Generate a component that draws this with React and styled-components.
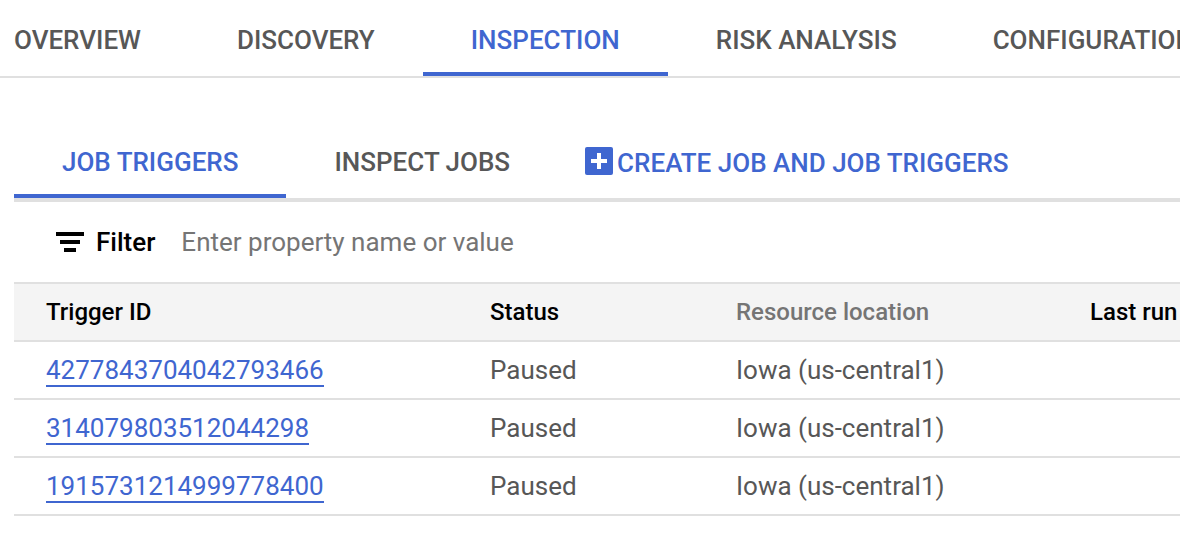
import React from "react";
import styled, { createGlobalStyle } from "styled-components";

const Global = createGlobalStyle`
  * { box-sizing: border-box; }
  body { margin: 0; background: #fff; font-family: Roboto, "Liberation Sans", sans-serif; color: #575757; overflow-x: hidden; }
  button, input { font-family: inherit; }
`;

const Page = styled.main`
  overflow: hidden;
`;

const MainTabs = styled.nav`
  display: flex;
  height: 78px;
  border-bottom: 2px solid #e0e0e0;
`;

const MainTab = styled.a`
  flex: none;
  height: 76px;
  padding: 4px 48px 0;
  line-height: 72px;
  font-size: 26px;
  font-weight: 500;
  white-space: nowrap;
  text-decoration: none;
  color: ${(p) => (p.$active ? "#3f66d0" : "#575757")};
  box-shadow: ${(p) => (p.$active ? "inset 0 -4px #3f66d0" : "none")};
  &:first-child { padding-left: 14px; }
`;

const Section = styled.section`
  margin: 48px 0 0 14px;
`;

const SubTabs = styled.div`
  display: flex;
  height: 76px;
  border-bottom: 4px solid #e0e0e0;
`;

const SubTab = styled.button`
  flex: none;
  height: 72px;
  padding: 0 48px;
  border: 0;
  background: none;
  font-size: 26px;
  font-weight: 500;
  white-space: nowrap;
  color: ${(p) => (p.$active ? "#3f66d0" : "#575757")};
  box-shadow: ${(p) => (p.$active ? "inset 0 -4px #3f66d0" : "none")};
`;

const CreateButton = styled.button`
  display: flex;
  align-items: flex-start;
  gap: 4px;
  padding: 21px 0 0;
  margin-left: 27px;
  border: 0;
  background: none;
  font-size: 26px;
  line-height: 32px;
  font-weight: 500;
  white-space: nowrap;
  color: #3f66d0;
`;

const FilterBar = styled.label`
  display: flex;
  align-items: center;
  height: 80px;
  padding-left: 42px;
`;

const FilterLabel = styled.span`
  margin: 0 26px 0 12px;
  font-size: 26px;
  font-weight: 500;
  color: #000;
`;

const FilterInput = styled.input`
  flex: 1;
  min-width: 0;
  padding: 0;
  border: 0;
  outline: 0;
  font-size: 26px;
  color: #333;
  &::placeholder { color: #757575; opacity: 1; }
`;

const Table = styled.table`
  width: 100%;
  table-layout: fixed;
  border-collapse: separate;
  border-spacing: 0;
  text-align: left;
`;

const Col = styled.col`
  width: ${(p) => p.$width};
`;

const HeadCell = styled.th`
  height: 60px;
  padding: 0 0 0 32px;
  border-top: 2px solid #e0e0e0;
  border-bottom: 2px solid #e0e0e0;
  background: #f4f4f4;
  font-size: 24px;
  font-weight: 500;
  white-space: nowrap;
  color: ${(p) => (p.$muted ? "#757575" : "#000")};
`;

const Cell = styled.td`
  height: 58px;
  padding: 0 0 0 32px;
  border-bottom: 2px solid #e0e0e0;
  font-size: 26px;
  white-space: nowrap;
`;

const TriggerLink = styled.a`
  border-bottom: 2px solid #3f66d0;
  color: #3f66d0;
  text-decoration: none;
`;

const mainTabs = ["OVERVIEW", "DISCOVERY", "INSPECTION", "RISK ANALYSIS", "CONFIGURATION"];
const triggers = ["4277843704042793466", "314079803512044298", "1915731214999778400"];

export default function App() {
  return (
    <Page>
      <Global />
      <MainTabs>
        {mainTabs.map((t) => (
          <MainTab key={t} href="#" $active={t === "INSPECTION"}>{t}</MainTab>
        ))}
      </MainTabs>
      <Section>
        <SubTabs>
          <SubTab $active>JOB TRIGGERS</SubTab>
          <SubTab>INSPECT JOBS</SubTab>
          <CreateButton>
            <svg width="28" height="28" viewBox="0 0 28 28" aria-hidden="true">
              <rect width="28" height="28" rx="2" fill="#3f66d0" />
              <path d="M14 6v16M6 14h16" stroke="#fff" strokeWidth="4" />
            </svg>
            CREATE JOB AND JOB TRIGGERS
          </CreateButton>
        </SubTabs>
        <FilterBar>
          <svg width="28" height="20" viewBox="0 0 28 20" aria-hidden="true">
            <path d="M0 2h28M4 10h20M8 18h12" stroke="#000" strokeWidth="4" />
          </svg>
          <FilterLabel>Filter</FilterLabel>
          <FilterInput type="text" placeholder="Enter property name or value" />
        </FilterBar>
        <Table>
          <colgroup>
            <Col $width="444px" />
            <Col $width="246px" />
            <Col $width="354px" />
            <Col $width="auto" />
          </colgroup>
          <thead>
            <tr>
              <HeadCell>Trigger ID</HeadCell>
              <HeadCell>Status</HeadCell>
              <HeadCell $muted>Resource location</HeadCell>
              <HeadCell>Last run</HeadCell>
            </tr>
          </thead>
          <tbody>
            {triggers.map((id) => (
              <tr key={id}>
                <Cell><TriggerLink href="#">{id}</TriggerLink></Cell>
                <Cell>Paused</Cell>
                <Cell>Iowa (us-central1)</Cell>
                <Cell />
              </tr>
            ))}
          </tbody>
        </Table>
      </Section>
    </Page>
  );
}
